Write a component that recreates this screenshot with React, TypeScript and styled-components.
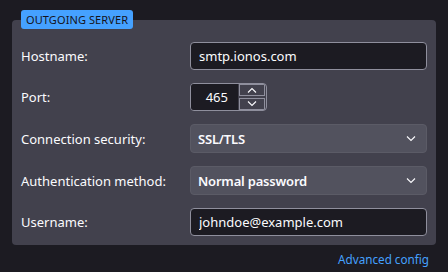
import React from 'react'
import styled, { createGlobalStyle } from 'styled-components'

const GlobalStyle = createGlobalStyle`
  body {
    margin: 0;
    background: #1c1b22;
    color: #fbfbfe;
    font-family: 'Noto Sans', 'Open Sans', sans-serif;
    font-size: 13px;
  }
`

function Chevron({ up }: { up?: boolean }) {
  return (
    <svg width='10' height='6' viewBox='0 0 10 6' fill='none'>
      <path
        d={up ? 'M1 5.5L5 1.5L9 5.5' : 'M1 0.5L5 4.5L9 0.5'}
        stroke='#fbfbfe'
        strokeWidth='1.1'
      />
    </svg>
  )
}

function App() {
  return (
    <React.Fragment>
      <GlobalStyle />
      <Page>
        <Panel>
          <Legend>OUTGOING SERVER</Legend>
          <Grid>
            <Label>Hostname:</Label>
            <TextField defaultValue='smtp.ionos.com' />

            <Label>Port:</Label>
            <Spinner>
              <NumberField defaultValue='465' />
              <SpinButtons>
                <SpinButton>
                  <Chevron up />
                </SpinButton>
                <SpinButton>
                  <Chevron />
                </SpinButton>
              </SpinButtons>
            </Spinner>

            <Label>Connection security:</Label>
            <Select>
              <span>SSL/TLS</span>
              <Chevron />
            </Select>

            <Label>Authentication method:</Label>
            <Select>
              <span>Normal password</span>
              <Chevron />
            </Select>

            <Label>Username:</Label>
            <TextField defaultValue='johndoe@example.com' />
          </Grid>
        </Panel>
        <Footer>
          <Link href='#'>Advanced config</Link>
        </Footer>
      </Page>
    </React.Fragment>
  )
}

const Page = styled.div`
  padding: 10px 12px 0;
`

const Panel = styled.fieldset`
  margin: 0;
  border: 0;
  border-radius: 4px;
  background: #42414d;
  padding: 0 9px 9px;
  min-width: 0;
`

const Legend = styled.legend`
  padding: 0 5px;
  height: 19px;
  line-height: 19px;
  border-radius: 3px;
  background: #45a1ff;
  color: #15141a;
  font-size: 11px;
  letter-spacing: 0.1px;
`

const Grid = styled.div`
  display: grid;
  grid-template-columns: 169px 1fr;
  row-gap: 13px;
  align-items: center;
  margin-top: 13px;
`

const Label = styled.label`
  line-height: 28px;
`

const TextField = styled.input`
  box-sizing: border-box;
  height: 28px;
  width: 100%;
  padding: 0 8px;
  border: 1px solid #8f8f9d;
  border-radius: 4px;
  background: #1c1b22;
  color: #fbfbfe;
  font: inherit;
  outline: none;
`

const Spinner = styled.div`
  box-sizing: border-box;
  display: flex;
  width: 77px;
  height: 28px;
  border: 1px solid #8f8f9d;
  border-radius: 4px;
  background: #42414d;
  overflow: hidden;
`

const NumberField = styled.input`
  box-sizing: border-box;
  width: 47px;
  height: 100%;
  padding: 0 10px 0 0;
  border: 0;
  background: #1c1b22;
  color: #fbfbfe;
  font: inherit;
  text-align: right;
  outline: none;
`

const SpinButtons = styled.div`
  display: flex;
  flex-direction: column;
  justify-content: center;
  gap: 2px;
  padding: 0 1px;
`

const SpinButton = styled.div`
  box-sizing: border-box;
  width: 26px;
  height: 12px;
  border: 1px solid #8f8f9d;
  display: flex;
  align-items: center;
  justify-content: center;
`

const Select = styled.div`
  box-sizing: border-box;
  height: 29px;
  display: flex;
  align-items: center;
  justify-content: space-between;
  padding: 0 10px 0 7px;
  border: 1px solid #5b5b66;
  border-radius: 4px;
  background: #52525e;
  font-weight: 600;
  letter-spacing: -0.2px;
`

const Footer = styled.div`
  display: flex;
  justify-content: flex-end;
  padding: 6px 7px 0;
`

const Link = styled.a`
  color: #45a1ff;
  font-size: 11.7px;
  text-decoration: none;
`

export default App
